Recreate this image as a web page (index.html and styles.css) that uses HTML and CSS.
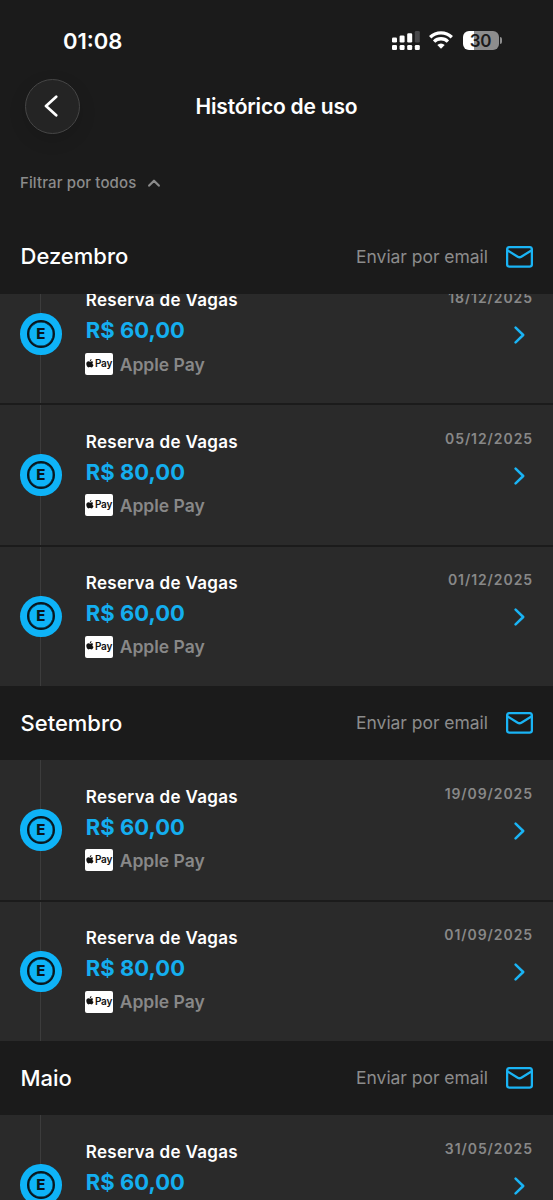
FILE: index.html
```html
<!DOCTYPE html>
<html lang="pt-BR">
<head>
<meta charset="utf-8">
<title>Histórico de uso</title>
<link rel="stylesheet" href="styles.css">
</head>
<body>
<svg class="defs" aria-hidden="true">
  <symbol id="mail" viewBox="0 0 27 22"><rect x="1.1" y="1.1" width="24.8" height="19.6" rx="2.4"/><path d="M1.6 4.4L11.700 10.700Q13.500 11.800 15.300 10.700L25.400 4.400"/></symbol>
  <symbol id="next" viewBox="0 0 12 18"><path d="M1.6 1.6L9.2 9L1.6 16.4"/></symbol>
  <symbol id="apple" viewBox="0 0 14 17"><path d="M9.8 0C10 1.9 8.500 3.900 6.700 3.900C6.500 2.100 8.100 .2 9.800 0ZM13 5.700C11 7 11 10 13.600 11.200C12.800 13.600 11.300 16 9.900 16C8.700 16 8.400 15.300 7 15.300C5.600 15.300 5.200 16 4.100 16C2.200 16 0 12.300 0 9.200C0 6.100 1.900 4.400 4 4.400C5.300 4.400 6.300 5.200 7.100 5.200C7.900 5.200 9.100 4.300 10.500 4.300C11.500 4.400 12.500 4.900 13 5.700Z"/></symbol>
</svg>
<div class="screen">
  <header class="status">
    <span class="clock">01:08</span>
    <div class="status-icons">
      <svg class="signal" viewBox="0 0 28 20"><g fill="#fff"><rect x="0" y="6.500" width="5" height="5" rx="1.300"/><rect x="7.600" y="4.500" width="5" height="7" rx="1.300"/><rect x="15.200" y="2.200" width="5" height="9.300" rx="1.300"/><rect x="0" y="14" width="5" height="5" rx="1.300"/><rect x="7.600" y="14" width="5" height="5" rx="1.300"/><rect x="15.200" y="14" width="5" height="5" rx="1.300"/><rect x="22.800" y="14" width="5" height="5" rx="1.300"/></g><rect x="22.800" y="0" width="5" height="11.500" rx="1.300" fill="#48484a"/></svg>
      <svg class="wifi" viewBox="0 0 24 18"><g fill="none" stroke="#fff" stroke-width="3.300"><path d="M1.200 6.300A15.400 15.400 0 0 1 22.800 6.300"/><path d="M5.100 10.600A9.800 9.800 0 0 1 18.900 10.600"/></g><path d="M8.300 14A5.300 5.300 0 0 1 15.700 14L12 17.800Z" fill="#fff"/></svg>
      <div class="battery"><span class="cell"><b>30</b></span><i></i></div>
    </div>
  </header>
  <nav class="topbar">
    <button class="back" aria-label="Voltar"><svg viewBox="0 0 14 22"><path d="M12.200 1.700L2 11L12.200 20.300"/></svg></button>
    <h1>Histórico de uso</h1>
  </nav>
  <div class="filter"><span>Filtrar por todos</span><svg viewBox="0 0 12 8"><path d="M1.200 6.600L6 1.700L10.800 6.600"/></svg></div>
  <section>
    <div class="month first"><h2>Dezembro</h2><span>Enviar por email</span><svg><use href="#mail"/></svg></div>
    <div class="list scrolled">
      <article class="item"><div class="rail"><span class="dot"><b>E</b></span></div><div class="info"><h3>Reserva de Vagas</h3><p class="price">R$ 60,00</p><p class="pay"><span class="badge"><svg><use href="#apple"/></svg>Pay</span><span>Apple Pay</span></p></div><div class="side"><time>18/12/2025</time><svg><use href="#next"/></svg></div></article>
      <article class="item"><div class="rail"><span class="dot"><b>E</b></span></div><div class="info"><h3>Reserva de Vagas</h3><p class="price">R$ 80,00</p><p class="pay"><span class="badge"><svg><use href="#apple"/></svg>Pay</span><span>Apple Pay</span></p></div><div class="side"><time>05/12/2025</time><svg><use href="#next"/></svg></div></article>
      <article class="item"><div class="rail"><span class="dot"><b>E</b></span></div><div class="info"><h3>Reserva de Vagas</h3><p class="price">R$ 60,00</p><p class="pay"><span class="badge"><svg><use href="#apple"/></svg>Pay</span><span>Apple Pay</span></p></div><div class="side"><time>01/12/2025</time><svg><use href="#next"/></svg></div></article>
    </div>
  </section>
  <section>
    <div class="month"><h2>Setembro</h2><span>Enviar por email</span><svg><use href="#mail"/></svg></div>
    <div class="list">
      <article class="item"><div class="rail"><span class="dot"><b>E</b></span></div><div class="info"><h3>Reserva de Vagas</h3><p class="price">R$ 60,00</p><p class="pay"><span class="badge"><svg><use href="#apple"/></svg>Pay</span><span>Apple Pay</span></p></div><div class="side"><time>19/09/2025</time><svg><use href="#next"/></svg></div></article>
      <article class="item"><div class="rail"><span class="dot"><b>E</b></span></div><div class="info"><h3>Reserva de Vagas</h3><p class="price">R$ 80,00</p><p class="pay"><span class="badge"><svg><use href="#apple"/></svg>Pay</span><span>Apple Pay</span></p></div><div class="side"><time>01/09/2025</time><svg><use href="#next"/></svg></div></article>
    </div>
  </section>
  <section>
    <div class="month"><h2>Maio</h2><span>Enviar por email</span><svg><use href="#mail"/></svg></div>
    <div class="list">
      <article class="item"><div class="rail"><span class="dot"><b>E</b></span></div><div class="info"><h3>Reserva de Vagas</h3><p class="price">R$ 60,00</p></div><div class="side"><time>31/05/2025</time><svg><use href="#next"/></svg></div></article>
    </div>
  </section>
</div>
</body>
</html>
```
FILE: styles.css
```css
* { box-sizing: border-box; margin: 0; padding: 0; }
body { background: #1b1b1b; font-family: Inter, "Liberation Sans", sans-serif; color: #fff; }
svg { display: block; flex: none; fill: none; stroke-linecap: round; stroke-linejoin: round; }
.defs { width: 0; height: 0; float: left; }
.screen { width: 553px; height: 1200px; overflow: hidden; background: #1b1b1b; }
span, h1, h2, h3, p, time { white-space: nowrap; }

.status { height: 78px; padding: 26px 51px 0 63px; display: flex; justify-content: space-between; align-items: flex-start; }
.clock { font-size: 22px; line-height: 30px; font-weight: 600; }
.status-icons { display: flex; padding-top: 5px; }
.signal { width: 28px; height: 20px; margin-right: 9px; }
.wifi { width: 24px; height: 18px; margin-right: 10px; stroke-linecap: butt; }
.battery { display: flex; align-items: center; height: 19px; }
.cell { width: 36px; height: 19px; border-radius: 6px; background: linear-gradient(90deg, #fff 31%, #8d8d8d 31%); display: flex; align-items: center; justify-content: center; }
.cell b { color: #1b1b1b; font-size: 17px; line-height: 19px; font-weight: 600; padding-top: 1px; letter-spacing: -.3px; }
.battery i { width: 2.500px; height: 7px; margin-left: 1px; border-radius: 0 3px 3px 0; background: #8d8d8d; }

.topbar { height: 56px; padding: 0 25px; display: grid; grid-template-columns: 55px 1fr 55px; align-items: center; }
.back { width: 55px; height: 55px; border-radius: 50%; border: 1px solid #464646; background: #242424; display: flex; align-items: center; justify-content: center; box-shadow: 0 6px 18px rgba(0, 0, 0, .12); }
.back svg { width: 14px; height: 22px; margin-right: 3px; stroke: #fff; stroke-width: 2.700; }
h1 { font-size: 21px; line-height: 30px; padding-top: 1px; font-weight: 600; text-align: center; letter-spacing: -.2px; }

.filter { height: 85.500px; padding: 38.500px 20px 0; display: flex; align-items: flex-start; color: #8b8b8b; font-size: 15px; line-height: 20px; font-weight: 500; letter-spacing: .12px; }
.filter svg { width: 12px; height: 8px; margin: 6.500px 0 0 12px; stroke: #8b8b8b; stroke-width: 2.200; }

.month { height: 74.500px; padding: 0 20px 0 20.500px; display: flex; align-items: center; background: #1b1b1b; }
.month h2 { flex: 1; font-size: 22px; line-height: 30px; font-weight: 500; }
.first h2 { padding-bottom: 1.500px; }
.month span { color: #8c8c8c; font-size: 17.500px; line-height: 24px; letter-spacing: -.04px; }
.month svg { width: 27px; height: 22px; margin-left: 18px; stroke: #1ab4f5; stroke-width: 2.300; }

.list { overflow: hidden; display: flex; flex-direction: column; }
.scrolled .item:first-child { margin-top: -29.800px; }
.item { flex: none; height: 139.200px; display: flex; background: #2a2a2a; padding-right: 20px; }
.item + .item { height: 141.300px; border-top: 2.100px solid #1b1b1b; }
.rail { width: 41.500px; margin-left: 20px; display: flex; align-items: center; background: linear-gradient(90deg, transparent 20px, #3c3c3c 20px, #3c3c3c 21.500px, transparent 21.500px); }
.dot { width: 41.500px; height: 41.500px; border-radius: 50%; background: #0eb3f7; display: flex; align-items: center; justify-content: center; }
.dot b { width: 28px; height: 28px; border: 2.400px solid #09161d; border-radius: 50%; box-shadow: inset 0 0 0 .4px #09161d; color: #09161d; font-size: 15px; line-height: 24px; font-weight: 800; text-align: center; }
.info { flex: 1; padding: 23.200px 0 0 24.200px; }
h3 { font-size: 17px; line-height: 26px; font-weight: 600; letter-spacing: .33px; }
.price { font-size: 22px; line-height: 35px; font-weight: 700; color: #14aeef; letter-spacing: .05px; }
.pay { height: 31.600px; display: flex; align-items: center; font-size: 17.500px; font-weight: 600; color: #888; }
.badge { width: 28px; height: 22px; margin: 0 6.400px 0 -.4px; border-radius: 2px; background: #fff; display: flex; align-items: center; justify-content: center; padding-bottom: 2px; color: #111; font-size: 10px; line-height: 16px; font-weight: 600; letter-spacing: -.2px; }
.badge svg { width: 8px; height: 9px; margin-right: .5px; fill: #111; }
.side { display: flex; flex-direction: column; align-items: flex-end; padding-top: 23.500px; }
time { font-size: 14px; line-height: 20px; font-weight: 600; letter-spacing: .92px; color: #888; }
.side svg { width: 12px; height: 18px; margin: 18.200px 7.500px 0 0; stroke: #1ab4f5; stroke-width: 2.500; }
```
